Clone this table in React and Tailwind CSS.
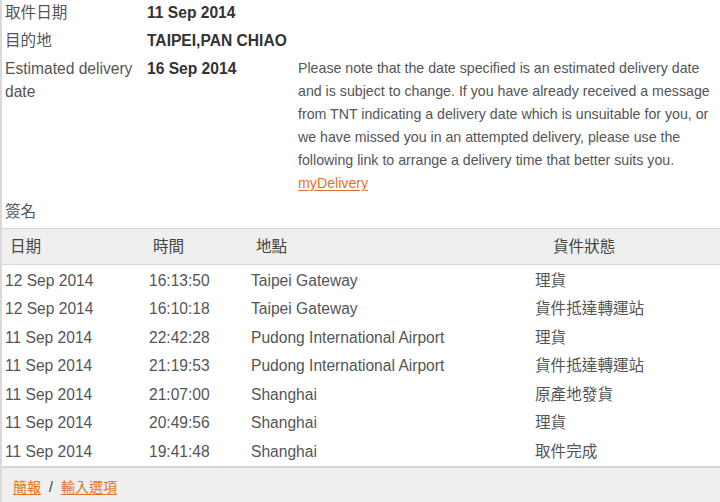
import React from 'react';

const rows = [
  ['12 Sep 2014', '16:13:50', 'Taipei Gateway', '理貨'],
  ['12 Sep 2014', '16:10:18', 'Taipei Gateway', '貨件抵達轉運站'],
  ['11 Sep 2014', '22:42:28', 'Pudong International Airport', '理貨'],
  ['11 Sep 2014', '21:19:53', 'Pudong International Airport', '貨件抵達轉運站'],
  ['11 Sep 2014', '21:07:00', 'Shanghai', '原產地發貨'],
  ['11 Sep 2014', '20:49:56', 'Shanghai', '理貨'],
  ['11 Sep 2014', '19:41:48', 'Shanghai', '取件完成'],
];

const font = { fontFamily: '"Liberation Sans", Arial, "Noto Sans CJK TC", sans-serif' };

const App = () => {
  return (
    <div
      className="w-[720px] h-[502px] overflow-hidden bg-white border-l-2 border-[#d9d9d9] text-[15.6px] text-[#555]"
      style={font}
    >
      {/* shipment summary */}
      <div className="pt-[1px] leading-[23px]">
        <div className="flex pl-[3px] pb-[5px]">
          <div className="w-[142px]">取件日期</div>
          <div className="w-[151px] font-bold text-[#333]">11 Sep 2014</div>
        </div>
        <div className="flex pl-[3px] pb-[5px]">
          <div className="w-[142px]">目的地</div>
          <div className="w-[151px] font-bold text-[#333]">TAIPEI,PAN CHIAO</div>
        </div>
        <div className="flex pl-[3px] pb-[5px]">
          <div className="w-[142px] pr-2">Estimated delivery date</div>
          <div className="w-[151px] font-bold text-[#333]">16 Sep 2014</div>
          <div className="w-[418px] text-[14.2px]">
            Please note that the date specified is an estimated delivery date and is subject to change. If you have
            already received a message from TNT indicating a delivery date which is unsuitable for you, or we have
            missed you in an attempted delivery, please use the following link to arrange a delivery time that better
            suits you.
            <br />
            <a href="#" className="text-[#e2732b] underline underline-offset-2">myDelivery</a>
          </div>
        </div>
        <div className="flex pl-[3px] pb-[5px]">
          <div className="w-[142px]">簽名</div>
        </div>
      </div>

      {/* history table */}
      <div className="grid grid-cols-[143px_103px_297px_1fr] h-[37px] items-center bg-[#efefef] border-t border-[#d4d4d4] border-b border-b-[#ddd3e0] text-[#444]">
        <div className="pl-[8px]">日期</div>
        <div className="pl-[8px]">時間</div>
        <div className="pl-[8px]">地點</div>
        <div className="pl-[8px]">貨件狀態</div>
      </div>
      <div className="pt-[1px]">
        {rows.map((r, i) => (
          <div key={i} className="grid grid-cols-[144px_102px_284px_1fr] h-[28.5px] items-center">
            <div className="pl-[3px]">{r[0]}</div>
            <div className="pl-[3px]">{r[1]}</div>
            <div className="pl-[3px]">{r[2]}</div>
            <div className="pl-[3px]">{r[3]}</div>
          </div>
        ))}
      </div>

      <div className="h-[40px] bg-[#efefef] border-t-2 border-[#d6d6d6] flex items-center pl-[11px] pt-[1px] text-[14px]">
        <a href="#" className="text-[#e2732b] underline underline-offset-2">簡報</a>
        <span className="mx-[8px] text-[#333]">/</span>
        <a href="#" className="text-[#e2732b] underline underline-offset-2">輸入選項</a>
      </div>
    </div>
  );
};

export default App;
